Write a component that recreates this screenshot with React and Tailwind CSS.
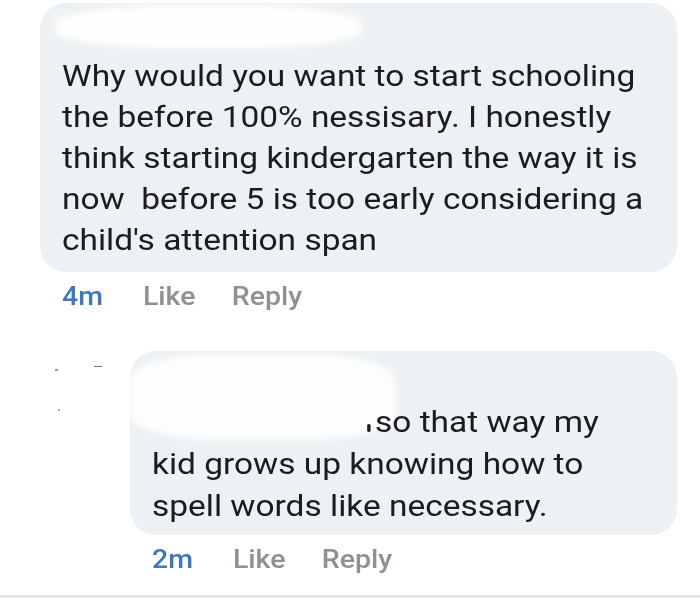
import React from 'react';

// the shot is stretched sideways a bit, so text boxes are laid out narrow and scaled back out
function Actions({ time }) {
    return (
        <div className="flex items-center text-[25px] leading-[30px] font-medium origin-left scale-x-[1.14]">
            <span className="text-[#3b78c0] w-[71px]">{time}</span>
            <span className="text-[#8d9094] w-[78px]">Like</span>
            <span className="text-[#8d9094]">Reply</span>
        </div>
    );
}

function App() {
    return (
        <div className="w-[700px] h-[598px] bg-white flex flex-col overflow-hidden font-['Roboto',sans-serif] text-[#1a1c1f]">
            {/* first comment */}
            <div className="ml-[40px] mt-[3px] w-[637px]">
                <div className="relative bg-[#eef1f3] rounded-[26px] pl-[22px] pr-[16px] pt-[52px] pb-[12px]">
                    {/* redacted name */}
                    <div className="absolute left-[16px] top-[3px] w-[305px] h-[42px] bg-white rounded-[40%] blur-[3px] opacity-95"></div>
                    <p className="w-[530px] origin-left scale-x-[1.115] text-[30px] leading-[41px]">
                        Why would you want to start schooling the before 100% nessisary. I honestly think starting kindergarten the way it is now&nbsp; before 5 is too early considering a child's attention span
                    </p>
                </div>
                <div className="pl-[22px] mt-[10px]">
                    <Actions time="4m" />
                </div>
            </div>

            {/* reply */}
            <div className="relative ml-[130px] mt-[39px] w-[547px]">
                <div className="relative bg-[#eef1f3] rounded-[26px] pl-[22px] pr-[16px] pt-[50px] pb-[8px]">
                    <div className="absolute left-[0px] top-[4px] w-[265px] h-[84px] bg-white rounded-[30%] blur-[3px] opacity-90"></div>
                    <p className="relative w-[430px] origin-left scale-x-[1.115] text-[30px] leading-[42px]">
                        <span className="inline-block w-[193px]"></span>
                        <span className="inline-block w-[3px] h-[8px] bg-[#1a1c1f] rounded-sm mr-[4px] align-baseline"></span>
                        so that way my kid grows up knowing how to spell words like necessary.
                    </p>
                </div>
                <div className="pl-[22px] mt-[10px]">
                    <Actions time="2m" />
                </div>
                <div className="absolute -left-[75px] top-[18px] w-[3px] h-[2px] bg-[#999]"></div>
                <div className="absolute -left-[36px] top-[15px] w-[8px] h-[1px] bg-[#777]"></div>
                <div className="absolute -left-[72px] top-[58px] w-[2px] h-[2px] bg-[#aaa]"></div>
            </div>

            <div className="mt-auto h-[3px] bg-[#e6e8ea]"></div>
        </div>
    );
}

export default App;
